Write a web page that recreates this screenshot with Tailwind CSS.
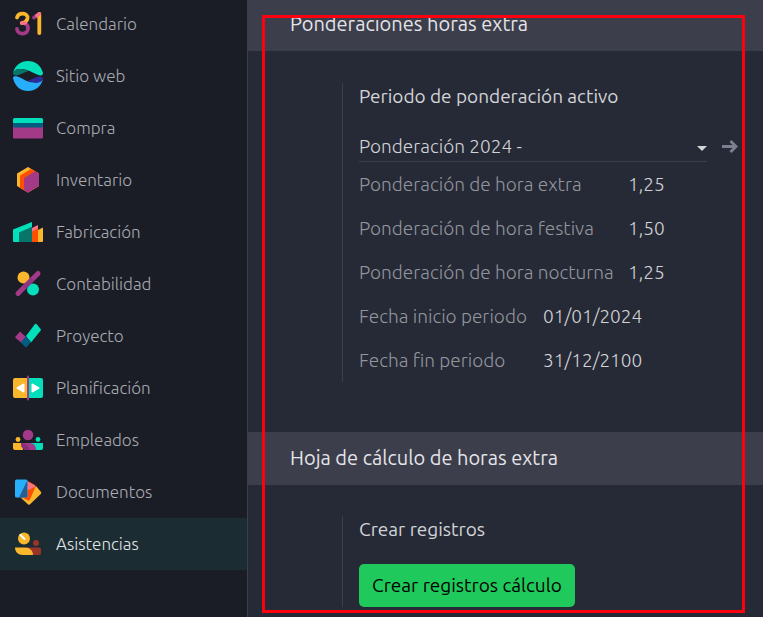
<!DOCTYPE html>
<html lang="es">
<head>
<meta charset="utf-8">
<meta name="viewport" content="width=device-width, initial-scale=1">
<title>Ajustes</title>
<script src="https://cdn.jsdelivr.net/npm/@tailwindcss/browser@4"></script>
</head>
<body class="relative flex h-screen overflow-hidden bg-[#262a36] font-['Ubuntu','Noto_Sans',sans-serif] text-[#d3d4d8]">

<nav aria-label="Aplicaciones" class="w-[248px] shrink-0 overflow-hidden border-r border-[#3c3e4b] bg-[#1b1d26] text-[17px] font-light text-[#a9abb2]">
  <ul class="-mt-[2px]">
    <li><a href="#" class="flex h-[52px] items-center gap-[13px] pl-[13px]">
      <svg class="size-[30px]" viewBox="0 0 30 30" fill="none" stroke-width="3.800" stroke-linecap="round" stroke-linejoin="round" aria-hidden="true"><path d="M4 20C4.500 26.500 15 26 15 19.500Q15 15 10.500 14" stroke="#a4398a"/><path d="M4 8.500C5.500 3 15 3.500 14.500 9Q14 13 9 14" stroke="#fbb72c"/><path d="M21 8.500L26.300 5" stroke="#a4398a"/><path d="M26.300 5V24" stroke="#fbb72c"/><path d="M8.500 14H12M24 6.500L26.300 5" stroke="#fc7385" stroke-width="3.600"/></svg>
      Calendario</a></li>
    <li><a href="#" class="flex h-[52px] items-center gap-[13px] pl-[13px]">
      <svg class="size-[30px]" viewBox="0 0 30 30" aria-hidden="true"><path d="M0 12C2 4 8 0 15 0S28 4 30 12C30 15 27 15 23 13C15 9 12 8 7 8Q2 8 0 12Z" fill="#02dfba"/><path d="M0 12Q2 7.500 8 8L16 9.700Q12 11 8 13C4 15 0 15 0 12Z" fill="#08756b"/><path d="M0 17C0 14.500 4 15 8 17C15 21 18 21.500 23 21.500Q28 21.500 30 18C28 26 22 30 15 30S2 26 0 17Z" fill="#27aefd"/><path d="M30 18Q28 22 22 21.600L14 20Q18 18.500 22 16.700C27 14.700 30 15 30 18Z" fill="#2d2a9a"/></svg>
      Sitio web</a></li>
    <li><a href="#" class="flex h-[52px] items-center gap-[13px] pl-[13px]">
      <svg class="size-[30px]" viewBox="0 0 30 30" aria-hidden="true"><path d="M0 9H30V24a1.500 1.500 0 0 1-1.500 1.500H0Z" fill="#a23a88"/><path d="M0 9H30V12.500a2 2 0 0 1-2 2H2a2 2 0 0 1-2-2Z" fill="#045b80"/><path d="M1.500 5H28.500A1.500 1.500 0 0 1 30 6.500V10H0V6.500A1.500 1.500 0 0 1 1.500 5Z" fill="#02dfba"/></svg>
      Compra</a></li>
    <li><a href="#" class="flex h-[52px] items-center gap-[13px] pl-[13px]">
      <svg class="size-[30px]" viewBox="0 0 30 30" aria-hidden="true"><path d="M15 2L26 8.500V21L15 27.500L4 21V8.500Z" fill="#fbb72c"/><path d="M18 4L26 8.500V21L15 27.500L7 23V10.500Z" fill="#fc5000"/><path d="M22 6.300L26 8.500V21L15 27.500L11 25V13Z" fill="#a23a88"/></svg>
      Inventario</a></li>
    <li><a href="#" class="flex h-[52px] items-center gap-[13px] pl-[13px]">
      <svg class="size-[30px]" viewBox="0 0 30 30" aria-hidden="true"><path d="M25 13L30 10.500V24a1 1 0 0 1-1 1H25Z" fill="#fbb72c"/><path d="M19 11L25 8V25H19Z" fill="#fc7385"/><path d="M19 14.500L25 11.500V25H19Z" fill="#fc5000"/><path d="M0 12.500L19 5V25H1A1 1 0 0 1 0 24Z" fill="#02dfba"/><path d="M6 15.500L19 9.800V25H6Z" fill="#08756b"/></svg>
      Fabricación</a></li>
    <li><a href="#" class="flex h-[52px] items-center gap-[13px] pl-[13px]">
      <svg class="size-[30px]" viewBox="0 0 30 30" aria-hidden="true"><circle cx="10.500" cy="8.500" r="6" fill="#fbb72c"/><circle cx="20" cy="20.500" r="6" fill="#02dfba"/><path d="M5 24.500L25 4.500" stroke="#a23a88" stroke-width="5" stroke-linecap="round"/><path d="M11 18.500L15.500 14M15 14.500L19.500 10" stroke="#8f3582" stroke-width="4.500"/></svg>
      Contabilidad</a></li>
    <li><a href="#" class="flex h-[52px] items-center gap-[13px] pl-[13px]">
      <svg class="size-[30px]" viewBox="0 -2 30 30" aria-hidden="true"><path d="M7 8.500L2.400 13.700Q2 14.200 2.400 14.800L8 19.500L13 14Z" fill="#a23a88"/><path d="M22 1L13 13L18 19.500L27.700 7.400Q28.200 6.700 27.600 6L23.500 1Q22.700 .4 22 1Z" fill="#02dfba"/><path d="M13 13.500L18 19L13.800 24Q13 24.500 12.200 24L7.800 19.500Z" fill="#045b80"/></svg>
      Proyecto</a></li>
    <li><a href="#" class="flex h-[52px] items-center gap-[13px] pl-[13px]">
      <svg class="size-[30px]" viewBox="0 0 30 30" aria-hidden="true"><path d="M2 5H15V25H2a2 2 0 0 1-2-2V7a2 2 0 0 1 2-2Z" fill="#fbb72c"/><path d="M15 5H28a2 2 0 0 1 2 2V23a2 2 0 0 1-2 2H15Z" fill="#02dfba"/><path d="M10.500 11.500V18.500L4.500 15ZM19.500 11.500V18.500L25.500 15Z" fill="#fff" stroke="#fff" stroke-width="2" stroke-linejoin="round"/><path d="M15 3.500V26.500" stroke="#a23a88" stroke-width="2" stroke-linecap="round"/></svg>
      Planificación</a></li>
    <li><a href="#" class="flex h-[52px] items-center gap-[13px] pl-[13px]">
      <svg class="size-[30px]" viewBox="0 0 30 30" aria-hidden="true"><circle cx="15" cy="10" r="5.300" fill="#a23a88"/><circle cx="5" cy="14.500" r="2.400" fill="#fbb72c"/><circle cx="25" cy="14.500" r="2.400" fill="#02dfba"/><path d="M0 18H10V25H2a2 2 0 0 1-2-2Z" fill="#fbb72c"/><path d="M17 18H30V23a2 2 0 0 1-2 2H17Z" fill="#02dfba"/><path d="M8 18H16C21 18 23 21 23 25H14C9 25 8 21 8 18Z" fill="#a23a88"/><path d="M8 18H10C14 19 16 22 17 25H14C9 25 8 21 8 18Z" fill="#8a3078"/></svg>
      Empleados</a></li>
    <li><a href="#" class="flex h-[52px] items-center gap-[13px] pl-[13px]">
      <svg class="size-[30px]" viewBox="0 -1 30 30" aria-hidden="true"><path d="M23 8L28 14Q28.400 15 28 15.700L16.800 26.500Q16 27 15.200 26.500L8 20Z" fill="#fbb72c"/><path d="M14 2.500L22 7Q23 8 22.500 9L17 21.500Q16.300 23 15 22.500L8 19Z" fill="#fc5000"/><path d="M14.500 3.500L21.500 7.200Q22.500 8 22 9L14 12.500Z" fill="#fc7385"/><path d="M3.500 1.500H13Q14.500 1.500 14.500 3V18Q14.500 19.500 13 19.500H3.500Q2 19.500 2 18V3Q2 1.500 3.500 1.500Z" fill="#27aefd"/><path d="M14.300 2.500V18Q14.300 19.500 13 19.500H6Z" fill="#2c5b8f"/></svg>
      Documentos</a></li>
    <li><a href="#" aria-current="page" class="flex h-[52px] items-center gap-[13px] bg-[#1b2d33] pl-[13px] text-[#e2e5e6]">
      <svg class="size-[30px]" viewBox="0 -1 30 30" aria-hidden="true"><circle cx="11" cy="8.500" r="6" fill="#fbb72c"/><path d="M7.500 5L11.500 9" stroke="#fff" stroke-width="2" stroke-linecap="round"/><circle cx="23" cy="13" r="3" fill="#9b3328"/><path d="M13 17.500H26a2 2 0 0 1 2 2V23a2 2 0 0 1-2 2H15Z" fill="#9b3328"/><path d="M2 17.500H12C17 17.500 20 21 20 25H10C5 25 2 22 2 17.500Z" fill="#fbb72c"/></svg>
      Asistencias</a></li>
  </ul>
</nav>

<main class="min-w-0 flex-1 overflow-hidden">
  <section class="-mt-[2px]">
    <h2 class="flex h-[53px] items-center bg-[#3c3e4b] pb-[1px] pl-[42px] text-xl text-[#e4e4e8]">Ponderaciones horas extra</h2>
    <div class="pt-8 pr-[25px] pb-[50px] pl-[94px]">
      <div class="border-l border-[#3c3e4b] pl-4">
        <label for="periodo" class="block text-[19px] leading-[26px]">Periodo de ponderación activo</label>
        <div class="mt-[22px] flex items-center gap-[15px]">
          <div class="relative flex-1">
            <select id="periodo" class="block h-[31px] w-full appearance-none border-b border-[#3c3e4b] bg-transparent text-[19px] font-light outline-none">
              <option>Ponderación 2024 -</option>
            </select>
            <svg class="pointer-events-none absolute top-[15px] right-0 h-[5px] w-[10px]" viewBox="0 0 10 5" fill="#d3d4d8" aria-hidden="true"><path d="M0 0H10L5 5Z"/></svg>
          </div>
          <button type="button" aria-label="Abrir periodo" class="text-[#7c7f8e]">
            <svg class="block size-4" viewBox="0 0 16 16" fill="none" stroke="currentColor" stroke-width="3" aria-hidden="true"><path d="M0 7.500H14M8.500 2L14 7.500L8.500 13"/></svg>
          </button>
        </div>
        <dl class="text-[19px] font-light">
          <div class="flex h-11 items-center"><dt class="w-[269px] text-[#93959d]">Ponderación de hora extra</dt><dd>1,25</dd></div>
          <div class="flex h-11 items-center"><dt class="w-[269px] text-[#93959d]">Ponderación de hora festiva</dt><dd>1,50</dd></div>
          <div class="flex h-11 items-center"><dt class="w-[269px] text-[#93959d]">Ponderación de hora nocturna</dt><dd>1,25</dd></div>
          <div class="flex h-11 items-center"><dt class="w-[184px] text-[#93959d]">Fecha inicio periodo</dt><dd>01/01/2024</dd></div>
          <div class="flex h-11 items-center"><dt class="w-[184px] text-[#93959d]">Fecha fin periodo</dt><dd>31/12/2100</dd></div>
        </dl>
      </div>
    </div>
  </section>
  <section>
    <h2 class="flex h-[53px] items-center bg-[#3c3e4b] pb-[1px] pl-[42px] text-xl text-[#e4e4e8]">Hoja de cálculo de horas extra</h2>
    <div class="pt-[31px] pr-[25px] pl-[94px]">
      <div class="border-l border-[#3c3e4b] pl-4">
        <h3 class="text-[19px] leading-[26px]">Crear registros</h3>
        <button type="button" class="mt-[22px] block h-[43px] rounded-[5px] bg-[#1fc95b] px-[13px] text-[19px] text-black">Crear registros cálculo</button>
      </div>
    </div>
  </section>
</main>

<div class="pointer-events-none absolute top-[15px] right-[18px] bottom-1 left-[262px] border-[3px] border-[#ff0010]"></div>
</body>
</html>
